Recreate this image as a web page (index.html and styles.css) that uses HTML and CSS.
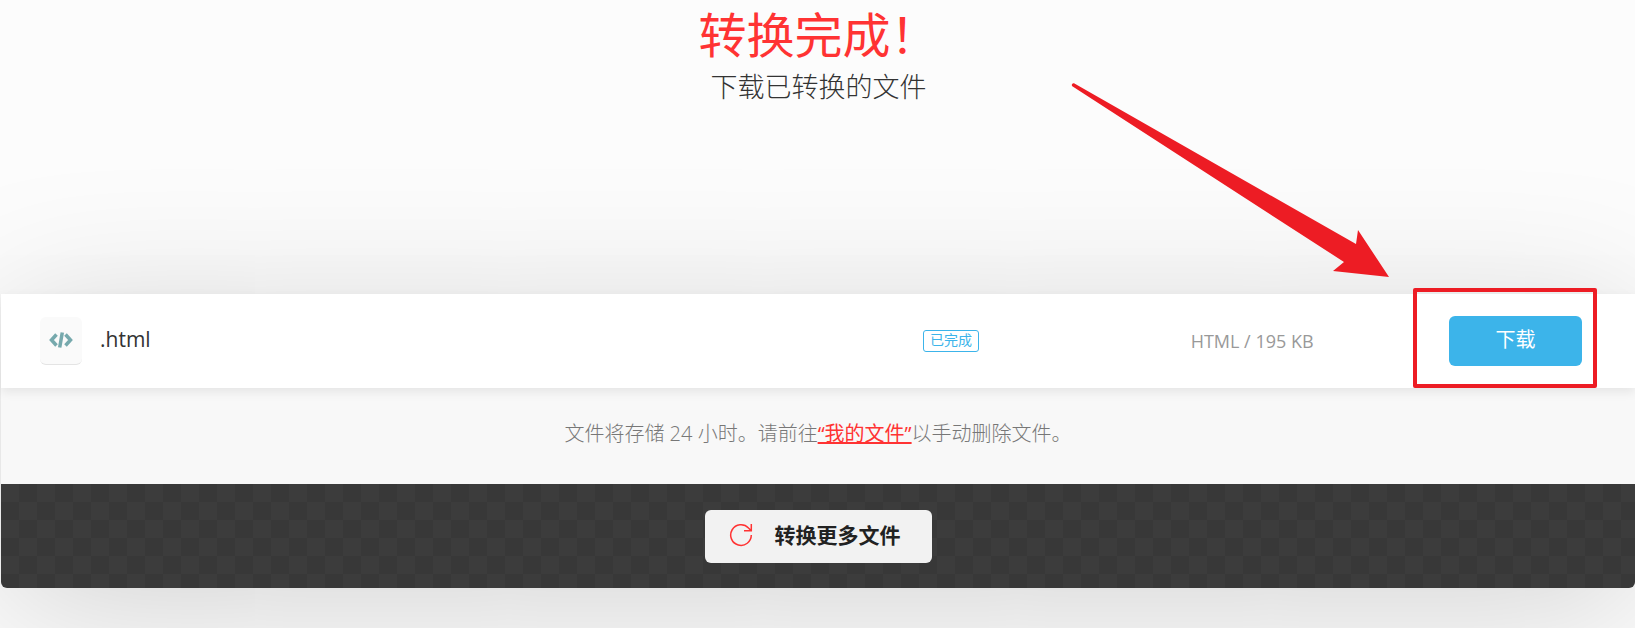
FILE: index.html
```html
<!DOCTYPE html>
<html lang="zh-CN">
<head>
    <meta charset="UTF-8">
    <title>转换完成</title>
    <link rel="stylesheet" href="styles.css">
</head>
<body>
<div class="head">
    <h1>转换完成！</h1>
    <p>下载已转换的文件</p>
</div>
<div class="card">
    <!--文件列表-->
    <div class="file">
        <div class="name">
            <span class="icon">
                <svg width="24" height="16" viewBox="0 0 24 16" fill="none" stroke="#76a9ad" stroke-width="3.500">
                    <path d="M7.500 2.500L2.500 8L7.500 13.500M16.500 2.500L21.500 8L16.500 13.500M13.300 .5L10.700 15.500"/>
                </svg>
            </span>
            <span class="title">.html</span>
        </div>
        <div><span class="status">已完成</span></div>
        <div class="meta">HTML / 195 KB</div>
        <div class="action">
            <button class="download" type="button">下载</button>
            <!--标注框和箭头-->
            <span class="mark"></span>
            <svg class="arrow" width="320" height="196" viewBox="0 0 320 196" fill="#ed1c24">
                <path d="M4 1.300L286 162L288 148L319 195L263 189L274 180L2.300 4.300A1.800 1.800 0 0 1 4 1.300Z"/>
            </svg>
        </div>
    </div>

    <p class="note">文件将存储 24 小时。请前往<a href="#">“我的文件”</a>以手动删除文件。</p>

    <!--底部按钮-->
    <div class="bottom">
        <button class="more" type="button">
            <svg width="24" height="24" viewBox="0 0 24 24" fill="none" stroke="#ff3333" stroke-width="1.500">
                <path d="M22.300 12A10.300 10.300 0 1 1 19.500 5L22 7.500M22.300 1V7.800H15"/>
            </svg>
            <span>转换更多文件</span>
        </button>
    </div>
</div>
</body>
</html>
```
FILE: styles.css
```css
*{
    margin: 0;
    padding: 0;
    box-sizing: border-box;
}
body{
    min-height: 100vh;
    overflow-x: hidden;
    background-color: #fcfcfc;
    color: #333;
    font-family: "Open Sans", "Noto Sans CJK SC", sans-serif;
}
button{
    border: none;
    cursor: pointer;
    font-family: inherit;
}
.head{
    height: 294px;
    padding: 2px 0 0 2px;
    text-align: center;
}
.head h1{
    font-size: 48px;
    line-height: 66px;
    font-weight: 400;
    color: #ff3333;
}
.head p{
    font-size: 27px;
    line-height: 38px;
    font-weight: 300;
}
.card{
    margin-left: 1px;
    margin-bottom: 40px;
    border-radius: 0 0 6px 6px;
    background-color: #f8f8f8;
    box-shadow: 0 20px 150px rgba(0,0,0,.17);
}

.file{
    position: relative;
    display: grid;
    grid-template-columns: 188fr 57fr 55fr 133px;
    align-items: center;
    height: 94px;
    padding: 0 53px 0 39px;
    background-color: #fff;
    box-shadow: 0 4px 10px rgba(0,0,0,.08);
}
.name{
    display: flex;
    align-items: center;
    gap: 18px;
    font-size: 21px;
}
.icon{
    display: flex;
    align-items: center;
    justify-content: center;
    width: 42px;
    height: 48px;
    padding-bottom: 2px;
    border-radius: 6px;
    background-color: #fafafa;
    border-bottom: 1px solid #e4e4e4;
}
.title{
    padding-bottom: 4px;
}
.status{
    display: block;
    width: fit-content;
    padding: 0 6px 2px;
    border: 1px solid #3cb4ea;
    border-radius: 3px;
    font-size: 14px;
    line-height: 18px;
    color: #3cb4ea;
}
.meta{
    font-size: 18px;
    color: #999;
}
.action{
    position: relative;
}
.download{
    display: block;
    width: 100%;
    height: 50px;
    padding-bottom: 6px;
    border-radius: 6px;
    font-size: 20px;
    color: #fff;
    background-color: #3cb4ea;
}
.mark{
    position: absolute;
    top: -28px;
    right: -15px;
    bottom: -22px;
    left: -36px;
    border: 4px solid #ed1c24;
    border-radius: 2px;
    pointer-events: none;
}
.arrow{
    position: absolute;
    right: 192px;
    bottom: 88px;
    pointer-events: none;
}

.note{
    padding: 30px 20px 34px;
    font-size: 20px;
    line-height: 32px;
    font-weight: 300;
    text-align: center;
    color: #777;
}
.note a{
    font-weight: 400;
    color: #ff3333;
}

.bottom{
    display: flex;
    justify-content: center;
    padding: 26px 20px 25px;
    border-radius: 0 0 6px 6px;
    background: repeating-conic-gradient(#383838 0 25%, #3c3c3c 0 50%) 0 0 / 36px 36px;
}
.more{
    display: flex;
    align-items: center;
    gap: 22px;
    height: 53px;
    padding: 0 31px 4px 24px;
    border-radius: 6px;
    font-size: 21px;
    font-weight: 700;
    color: #222;
    background-color: #f2f2f2;
}
.more span{
    padding-bottom: 2px;
}
```
